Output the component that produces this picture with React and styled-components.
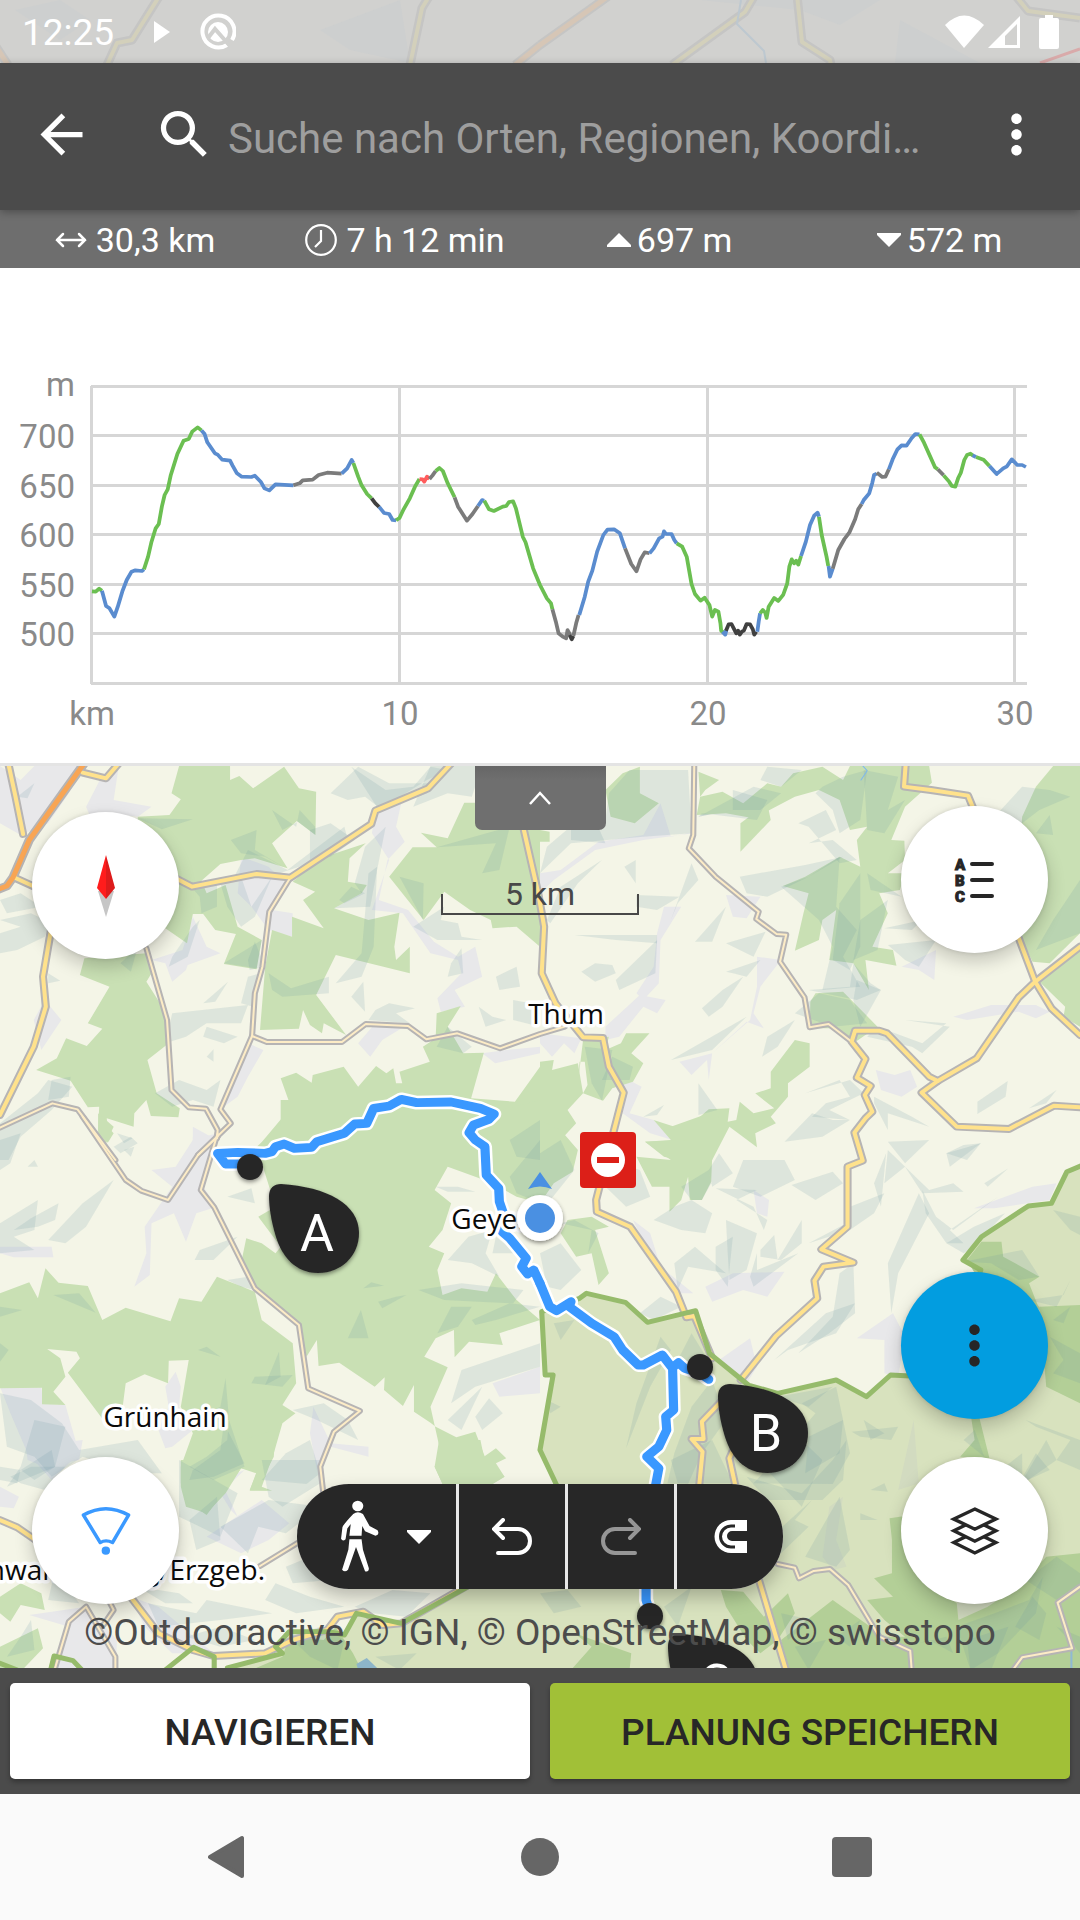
import React from 'react';
import styled, { createGlobalStyle, css } from 'styled-components';
import { MdArrowBack, MdMoreVert, MdSearch } from 'react-icons/md';

const GlobalStyle = createGlobalStyle`
  * {
    box-sizing: border-box;
  }

  body {
    background: #fafafa;
    font-family: Roboto, "Noto Sans", sans-serif;
    margin: 0;
  }

  button, input {
    font-family: inherit;
  }
`;

const Page = styled.div`
  display: flex;
  flex-direction: column;
  min-height: 100vh;
`;

const StatusBar = styled.div`
  align-items: center;
  background: #d1d1cf;
  color: white;
  display: flex;
  height: 63px;
  justify-content: space-between;
  padding: 0 20px 0 22px;
  position: relative;
`;

const StatusBackdrop = styled.svg`
  height: 100%;
  left: 0;
  position: absolute;
  top: 0;
  width: 100%;
`;

const StatusGroup = styled.div`
  align-items: center;
  display: flex;
  position: relative;
`;

const Clock = styled.time`
  font-size: 37px;
  line-height: 44px;
  margin-right: 40px;
  padding-top: 2px;
`;

const Header = styled.header`
  align-items: center;
  background: #4b4b4b;
  box-shadow: 0 2px 8px rgba(0, 0, 0, 0.3);
  color: white;
  display: flex;
  height: 147px;
  padding: 0 32px 4px 30px;
  position: relative;
  z-index: 1;
`;

const IconButton = styled.button`
  background: none;
  border: none;
  color: inherit;
  cursor: pointer;
  display: flex;
  padding: 0;
`;

const SearchBox = styled.label`
  align-items: center;
  display: flex;
  flex: 1;
  gap: 12px;
  margin-left: 60px;
`;

const SearchInput = styled.input`
  background: none;
  border: none;
  color: white;
  flex: 1;
  font-size: 42px;
  height: 56px;
  margin-top: 8px;
  min-width: 0;
  outline: none;
  padding: 0;
  text-overflow: ellipsis;

  &::placeholder {
    color: #9e9e9e;
    opacity: 1;
  }
`;

const Stats = styled.ul`
  background: #6e6e6e;
  color: white;
  display: grid;
  grid-template-columns: 5fr 5fr 4.8fr 5.2fr;
  height: 58px;
  list-style: none;
  margin: 0;
  padding: 2px 0 0;
`;

const Stat = styled.li`
  align-items: center;
  display: flex;
  font-size: 34px;
  gap: ${({ $tight }) => ($tight ? '6px' : '9px')};
  justify-content: center;
`;

const Elevation = styled.section`
  background: white;
  border-bottom: 3px solid #e4e4e4;

  svg {
    display: block;
    width: 100%;
  }

  text {
    fill: #8a8a8a;
    font-size: 33px;
  }
`;

const Map = styled.main`
  background: #f4f5e7;
  display: flex;
  flex: 1;
  flex-direction: column;
  min-height: 800px;
  overflow: hidden;
  position: relative;
`;

const MapCanvas = styled.svg`
  height: 100%;
  left: 0;
  position: absolute;
  top: 0;
  width: 100%;
`;

const PlaceName = styled.text`
  fill: #0a0a0a;
  font-family: "Open Sans", "Noto Sans", sans-serif;
  font-size: 28px;
  paint-order: stroke;
  stroke: white;
  stroke-linejoin: round;
  stroke-width: 7px;
`;

const PinLetter = styled.text`
  fill: white;
  font-size: 52px;
  text-anchor: middle;
`;

const CollapseButton = styled.button`
  align-items: center;
  align-self: center;
  background: linear-gradient(#666, #6f6f6f 14px);
  border: none;
  border-radius: 0 0 7px 7px;
  display: flex;
  height: 64px;
  justify-content: center;
  position: relative;
  width: 131px;
`;

const Scale = styled.div`
  align-self: center;
  color: #484848;
  display: flex;
  flex-direction: column;
  font-size: 32px;
  line-height: 36px;
  margin-top: 46px;
  position: relative;
  text-align: center;
  width: 198px;

  &::after {
    border: 2px solid #484848;
    border-top: none;
    content: '';
    height: 19px;
    margin-top: -18px;
  }
`;

const MapControls = styled.div`
  bottom: 64px;
  display: flex;
  flex-direction: column;
  gap: 38px;
  position: absolute;
  top: 40px;

  ${({ $side }) => ($side === 'left'
    ? css`left: 32px; padding-top: 6px;`
    : css`right: 32px;`)}
`;

const RoundButton = styled.button`
  align-items: center;
  background: ${({ $primary }) => ($primary ? '#029de0' : 'white')};
  border: none;
  border-radius: 50%;
  box-shadow: 0 8px 18px rgba(0, 0, 0, 0.2), 0 0 4px rgba(0, 0, 0, 0.12);
  color: #262626;
  cursor: pointer;
  display: flex;
  height: 147px;
  justify-content: center;
  padding: 0;
  width: 147px;
`;

const Spacer = styled.div`
  flex: 1;
`;

const MapFooter = styled.div`
  align-items: center;
  bottom: 0;
  display: flex;
  flex-direction: column;
  gap: 22px;
  left: 0;
  padding-bottom: 13px;
  pointer-events: none;
  position: absolute;
  right: 0;
`;

const Toolbar = styled.div`
  background: #e8e8e8;
  border-radius: 52px;
  box-shadow: 0 8px 18px rgba(0, 0, 0, 0.25);
  display: flex;
  gap: 3px;
  height: 105px;
  overflow: hidden;
  pointer-events: auto;
`;

const ToolButton = styled.button`
  align-items: center;
  background: #272727;
  border: none;
  color: white;
  cursor: pointer;
  display: flex;
  gap: 27px;
  justify-content: center;
  padding: 0 ${({ $wide }) => ($wide ? '10px' : '0')} 0 ${({ $wide }) => ($wide ? '28px' : '0')};
  width: ${({ $wide }) => ($wide ? '159px' : '106px')};

  &:disabled {
    color: #969696;
  }
`;

const Attribution = styled.p`
  color: #4c4c4c;
  font-size: 37px;
  line-height: 44px;
  margin: 0;
  white-space: nowrap;
`;

const ActionBar = styled.footer`
  background: #4b4b4b;
  display: grid;
  gap: 20px;
  grid-template-columns: 1fr 1fr;
  padding: 15px 10px;
`;

const ActionButton = styled.button`
  background: ${({ $primary }) => ($primary ? '#a1c037' : 'white')};
  border: none;
  border-radius: 5px;
  box-shadow: 0 3px 5px rgba(0, 0, 0, 0.3);
  color: #272727;
  cursor: pointer;
  font-size: 37px;
  font-weight: 500;
  height: 96px;
  padding: 2px 0 0;
`;

const SystemNav = styled.nav`
  align-items: center;
  background: #fafafa;
  color: #666;
  display: flex;
  gap: 272px;
  height: 126px;
  justify-content: center;
`;

/* The map and the profile are traced on sheets that share one drawing scale. */
const SHEETS = {
  nw: [0, -6],
  ne: [540, -6],
  sw: [0, 354],
  se: [540, 354],
  bw: [0, 674],
  be: [540, 674],
};

const Sheet = ({ at, children }) => (
  <g transform={ `translate(${at[0]} ${at[1]}) scale(.34439 .33333)` }>{ children }</g>
);

const FORESTS = {
  nw: [
    'M245 595L425 580 440 640 425 665 468 735 485 785 490 850 428 900 455 1000 522 1045 518 1072 438 1068 425 1020 390 1060 388 1100 310 1075 312 1100 330 1120 313 1148 285 1110 288 1040 255 1042 205 962 105 930 165 895 192 835 252 858 297 806 255 790 318 680 232 645Z',
    'M520 18L668 18 668 60 695 48 735 85 825 20 868 85 918 95 916 225 862 183 790 250 835 325 740 295 700 300 640 312 585 362 600 400 655 375 690 500 760 540 745 628 650 612 685 522 625 510 590 462 560 462 543 550 480 505 400 500 400 170 492 165 525 118 498 100Z',
    'M1062 250L930 295 850 365 915 395 880 420 940 505 848 470 848 530 790 510 770 620 755 810 868 806 880 750 900 795 935 820 940 790 1005 825 918 705 975 585 1190 640 1190 560 1150 600 1145 560 1160 458 1070 480 970 445 1050 400 1065 375 1010 365 1015 295Z',
    'M1348 128L1568 128 1568 560 1500 500 1430 505 1425 480 1365 450 1290 395 1230 480 1130 350 1198 262 1268 262 1222 218 1300 235Z',
    'M815 955L860 938 905 968 908 945 998 920 1040 980 1092 918 1122 940 1142 925 1150 970 1168 970 1160 935 1248 905 1228 860 1265 835 1268 760 1338 738 1300 800 1345 880 1405 878 1368 1015 1495 1025 1568 920 1568 1200 745 1200 745 1165 845 1042Z',
  ],
  ne: [
    'M190 90L240 40 290 20 290 100 345 130 275 190 205 170Z',
    'M870 290L770 350 705 378 780 400 765 460 740 572 810 540 820 480 860 450 840 600 910 610 955 690 945 600 1035 617 1025 570 965 560 1010 460 985 400 1045 390 1060 340 1010 340 1060 300 1058 242 1020 240 1060 140 1138 68 1130 18 900 18 880 60 820 20 735 40 700 80 660 70 590 130 530 95 465 110 455 165 540 160 620 175 740 110 810 90 870 120 900 210 950 200 920 240 930 320Z',
    'M582 190L660 130 670 180 582 275Z',
    'M460 35L520 60 480 90 465 110Z',
    'M0 210L28 215 28 245 0 245Z',
    'M1440 80L1490 18 1568 18 1568 520 1480 610 1430 605 1400 540 1390 300 1400 170Z',
    'M1568 570L1445 660 1525 740 1520 770 1568 800Z',
    'M800 700L880 695 980 800 910 850 850 805 783 805 785 725Z',
    'M783 850L740 840 670 935 670 985 625 1000 680 1045 620 1060 580 1025 570 1080 545 1085 550 1045 490 1048 420 1110 330 1080 380 1140 305 1145 360 1190 400 1200 500 1200 550 1100 630 1162 625 1120 685 1090 670 1070 720 1010 720 970 783 920Z',
    'M125 840L200 830 190 870 235 850 250 820 318 820 265 880 300 910 270 965 210 985 183 1022 125 1000 138 975 130 905 115 905 110 970Z',
    'M0 905L40 900 35 930 110 910 125 1000 80 1050 105 1090 60 1140 0 1200Z',
  ],
  sw: [
    'M745 80L815 20 815 -60 1080 -60 1360 -40 1420 -20 1568 -60 1568 250 1500 230 1420 185 1300 140 1262 210 1310 250 1285 330 1245 380 1290 400 1270 450 1285 525 1340 505 1415 515 1440 460 1500 540 1568 600 1450 640 1460 675 1362 665 1320 712 1318 630 1265 655 1232 710 1300 742 1250 860 1280 1000 1262 1040 1285 1092 1430 1092 1465 1070 1408 1010 1380 935 1325 952 1265 920 1250 908 1202 875 1202 795 1170 858 1115 810 1117 772 1088 800 985 728 925 738 920 660 890 710 870 620 740 505 700 430 715 355 760 370 800 400 815 380 750 290 800 260Z',
    'M0 520L85 487 110 535 132 445 170 488 255 498 297 600 365 563 495 604 520 535 585 545 630 470 740 515 760 600 850 670 860 790 820 855 858 880 820 910 795 1000 760 1100 790 1112 725 1110 745 1060 700 1045 655 1120 600 1180 540 1160 525 1100 525 1040 560 940 525 860 548 720 490 722 488 790 420 763 365 790 355 870 300 900 197 758 232 715 222 695 137 687 175 715 190 770 155 815 190 855 122 853 122 803 0 805Z',
    'M285 -20L330 20 308 70 285 40Z',
  ],
  se: [
    'M80 300L150 290 200 320 160 330 200 460 170 495 150 400 105 410 60 340Z',
    'M305 65L430 60 380 20 490 -20 540 0 500 110 497 185 470 240 435 240 430 170 410 240 376 275 376 200 325 200 280 110 380 120Z',
    'M0 0L60 30 110 90 95 155 40 190 0 250Z',
  ],
  bw: [
    'M525 60L580 60 610 10 700 0 800 -30 795 50 750 140 780 152 725 152 745 95 700 85 655 150 600 225 550 190 525 130Z',
    'M0 470L60 430 120 460 130 510 60 495 30 545 0 520Z',
    'M110 565L125 625 70 684 0 684 0 620Z',
    'M1275 0L1395 0 1405 50 1440 25 1470 55 1440 70 1465 110 1430 132 1285 132 1262 80Z',
  ],
};

const PARK_FORESTS = {
  se: [
    'M1450 560L1568 555 1568 850 1470 800Z',
    'M1282 365L1340 365 1345 410 1450 470 1420 490 1445 555 1480 600 1380 500 1260 455 1240 420Z',
    'M1250 880L1275 890 1305 1015 1220 1010 1262 960Z',
  ],
  be: [
    'M1015 235L1080 225 1100 400 1210 490 1215 540 1300 500 1400 430 1470 350 1568 340 1568 690 720 690 700 600 850 480 1000 590 1060 590 1000 540 950 480 1025 470 970 415 1022 400 1022 300Z',
    'M525 450L590 455 650 530 720 460 740 520 690 600 640 640 600 600 540 500Z',
    'M100 580L265 640 260 690 90 690 150 620Z',
  ],
  bw: ['M840 590L940 600 975 560 1025 640 1050 690 730 690 820 650Z'],
};

const TOWNS = {
  nw: [
    'M100 18L240 18 200 100 140 190 60 225 0 190 0 18 60 60Z',
    'M290 60L345 18 330 120 440 140 400 170 300 160 270 190 250 140Z',
    'M700 290L780 320 835 375 790 450 850 460 848 530 780 510 730 440 690 400Z',
    'M1090 150L1165 130 1150 200 1175 245 1125 300 1100 420 1185 450 1260 545 1330 590 1380 560 1400 650 1320 690 1350 740 1280 755 1270 715 1340 640 1330 600 1250 580 1170 460 1080 450 1130 300 1080 220Z',
    'M560 470L600 560 640 580 545 615 540 630 500 665 480 610 440 600 530 570Z',
    'M640 1048L720 850 765 870 720 950 690 1010Z',
    'M130 720L178 780 120 870 98 780Z',
    'M1040 850L1090 790 1190 790 1110 840 1075 890Z',
    'M1400 880L1470 870 1568 860 1568 880 1438 910Z',
    'M560 1130L640 1130 600 1200 560 1200Z',
  ],
  ne: [
    'M445 220L300 240 160 270 40 360 0 400 0 340 60 330 170 245 300 225 350 130 380 230 430 220Z',
    'M540 405L640 410 600 475 560 470Z',
    'M190 800L290 705 365 720 340 760 300 740 230 830 190 840Z',
    'M630 590L700 600 640 680 620 760 650 805 600 785 500 880 405 905 440 945 485 900 490 960 500 880 610 780 630 680Z',
    'M975 930L1030 945 1075 930 1095 980 1050 1010 990 990Z',
    'M1050 620L1150 570 1145 660 1100 630Z',
    'M1200 770L1310 735 1440 735 1480 755 1440 775 1390 755 1240 780Z',
    'M0 820L120 835 100 880 70 850 35 890 0 850Z',
    'M360 440L410 440 350 540 345 670 300 720 280 700 330 620 340 520Z',
    'M240 950L295 980 260 1060 330 1080 385 1140 320 1120 240 1060Z',
  ],
  sw: [
    'M560 60L630 40 590 200 630 260 570 280 540 365 505 280 440 310 435 465 390 500 425 400 420 320 500 200 440 150 510 140Z',
    'M0 380L150 380 155 412 40 412 0 400Z',
    'M510 755L525 800 520 860 560 930 500 980 480 985 460 930 490 860 480 800Z',
    'M0 800L120 800 125 850 190 855 230 1000 150 1080 80 1000 30 880Z',
    'M560 20L630 60 610 110 560 90Z',
    'M1430 790L1568 740 1568 820 1450 830Z',
    'M910 860L960 970 1070 980 1070 1010 960 980 920 1050 900 940Z',
  ],
  se: [
    'M620 210L665 240 660 290 630 280Z',
    'M480 500L560 460 710 455 660 530 590 510 500 545Z',
    'M1025 580L1060 650 1040 770 1000 760 1000 660 920 655Z',
    'M520 720L610 655 630 740 600 790Z',
    'M270 300L320 340 350 440 445 520 400 520 330 430Z',
    'M1430 200L1500 190 1480 240 1320 265 1260 265Z',
    'M1085 900L1100 1090 1040 1110Z',
  ],
  bw: [
    'M75 20L240 0 230 60 130 80 80 60Z',
    'M0 140L55 170 40 205 0 200Z',
    'M640 120L690 230 670 210 640 160 710 90Z',
    'M85 525L250 500 340 600 335 690 150 690 200 560Z',
    'M380 470L460 500 620 640 500 640 420 560Z',
    'M600 290L760 180 840 250 780 300 700 340Z',
  ],
  be: ['M840 200L880 170 860 300 890 380 850 390 820 350Z', 'M1210 490L1230 460 1450 420 1400 500 1300 540 1215 540Z'],
};

const SHADES = {
  nw: [
    'M960 100L1040 20 1130 70 1260 70 1240 100 1110 150 1060 110 1010 120Z',
    'M1020 20L1100 150 1240 60 1300 30 1250 20 1200 80 1120 90Z',
    'M1250 18L1400 18 1370 110 1300 100 1200 140Z',
    'M670 240L745 210 740 270 830 325 770 290 700 280Z',
    'M790 150L860 200 870 150 915 200 915 225 865 185 820 210Z',
    'M720 270L835 330 860 310 1000 200 1010 240 900 310 780 350 680 350Z',
    'M900 210L960 190 1030 240 960 290 900 300Z',
    'M1060 260L1120 200 1095 330 1075 440 970 445 1050 400 1030 370Z',
    'M1070 340L1095 320 1085 560 1050 650 975 670 1050 580Z',
    'M640 370L700 350 730 440 790 350 740 470 700 500 660 440Z',
    'M555 380L630 370 630 440 585 460 580 410Z',
    'M0 480L90 460 150 490 130 530 50 570 0 580 0 520 60 500Z',
    'M500 590L560 500 580 480 545 590 490 620Z',
    'M650 610L760 540 745 625Z',
    'M720 600L740 545 770 620 725 630Z',
    'M590 730L662 665 625 725Z',
    'M780 640L845 685 955 650 955 700 820 710 790 690Z',
    'M500 760L720 735 700 790 600 790 540 830 480 850Z',
    'M720 650L755 640 735 740 700 730Z',
    'M1020 710L1055 665 1060 755Z',
    'M1090 750L1130 730 1205 745 1150 760 1190 790 1070 780Z',
    'M1200 500L1290 440 1280 480 1330 490 1340 530 1400 540 1270 540Z',
    'M1310 610L1340 565 1345 640 1300 650Z',
    'M1390 740L1430 770 1470 780 1410 800Z',
    'M1490 720L1540 730 1568 800 1490 780Z',
    'M1268 860L1300 800 1370 860 1345 880Z',
    'M0 1090L110 1000 140 960 210 980 150 1050 60 1130 25 1200 0 1200Z',
    'M150 960L205 950 200 1010 140 1020Z',
    'M400 175L560 178 470 208Z',
    'M50 110L100 70 80 115Z',
    'M330 1160L380 1130 400 1150 350 1180Z',
    'M600 890L620 868 620 905Z',
    'M1268 262L1480 200 1450 330 1400 340 1440 250Z',
    'M1160 350L1230 370 1228 480Z',
    'M350 610L400 560 380 635Z',
    'M140 640L175 662 140 670Z',
    'M0 420L60 400 120 440 20 460Z',
    'M1480 1140L1568 1080 1568 1200 1500 1190Z',
    'M450 1000L520 960 600 990 640 960 620 1040 560 1020 500 1040Z',
    'M985 420L1020 380 1060 400 1000 430Z',
    'M1440 650L1500 620 1510 680 1450 690Z',
    'M600 800L690 830 650 850 590 830Z',
  ],
  ne: [
    'M200 100L260 30 430 30 440 220 300 230 90 250 0 340 20 260 100 190 190 180Z',
    'M90 210L160 180 190 250 90 240Z',
    'M460 170L620 80 700 100 640 150 560 150Z',
    'M460 170L560 150 560 90 660 120 630 180 470 160Z',
    'M660 20L760 30 700 80 640 60Z',
    'M820 80L880 50 950 30 930 180 870 220 850 150 800 100Z',
    'M940 30L1040 50 1010 150 1060 120 1000 220 950 210Z',
    'M750 190L830 150 860 210 780 250 850 240 920 300 870 310 780 200Z',
    'M780 350L870 290 860 440 920 510 880 590 930 680 820 690 850 560 810 480 700 380Z',
    'M580 350L770 315 880 290 780 350 660 410 600 400Z',
    'M870 430L930 340 930 560 900 630 850 600Z',
    'M930 480L1010 420 980 570 910 600Z',
    'M950 340L1050 410 960 390Z',
    'M910 610L960 670 990 690 920 720 780 690 900 680Z',
    'M280 405L405 410 340 450 280 440Z',
    'M100 525L340 525 340 550 220 540Z',
    'M450 545L540 440 500 545Z',
    'M540 550L655 515 620 590Z',
    'M160 610L210 615 220 640 160 665 120 635Z',
    'M220 660L340 540 335 640 230 690Z',
    'M540 635L640 600 600 650 560 640Z',
    'M470 745L530 690 590 650 530 740 490 770Z',
    'M380 900L600 770 500 870Z',
    'M645 890L660 830 740 780 690 860Z',
    'M740 760L810 700 900 720 950 790 850 800Z',
    'M950 830L1080 860 1110 880 1190 800 1060 780 1180 790 1110 850 980 800Z',
    'M1000 505L1110 480 1080 510Z',
    'M1010 555L1150 540 1100 620 1060 600Z',
    'M1320 170L1400 80 1480 90 1540 110 1450 150 1400 190Z',
    'M1440 220L1480 165 1490 225Z',
    'M1490 480L1568 360 1568 520 1440 570Z',
    'M1270 1025L1358 963 1352 1010 1270 1062Z',
    'M1420 1045L1500 990 1470 1030Z',
    'M770 1000L870 960 900 1010 830 1030 790 1070 900 1080 840 1050 940 1000 900 960Z',
    'M710 1145L790 1060 850 1080 900 1080 820 1130Z',
    'M970 1010L1080 1070 1130 1100 1010 1060 1010 1110 970 1030Z',
    'M130 860L210 870 180 1022 150 970Z',
    'M210 890L270 920 260 960 180 960Z',
    'M460 970L515 1050 460 1065Z',
    'M300 1070L360 1035 340 1065Z',
    'M245 320L278 300 278 370Z',
    'M60 380L180 300 110 370 30 490 20 480Z',
    'M380 480L440 310 460 360 400 430Z',
    'M1180 1180L1280 1150 1240 1200Z',
    'M920 660L990 690 930 800 910 720Z',
  ],
  sw: [
    'M0 310L110 240 100 330 40 350 100 390 0 400Z',
    'M40 330L90 295 170 250 160 300 110 320Z',
    'M140 360L240 250 330 180 250 320 190 370Z',
    'M565 420L580 390 690 350 620 420Z',
    'M660 230L730 205 740 250Z',
    'M155 525L230 520 278 578Z',
    'M575 690L600 680 640 710Z',
    'M770 795L810 695 815 770Z',
    'M1010 655L1048 570 1070 655Z',
    'M1055 505L1078 487 1115 497Z',
    'M1098 545L1150 530 1180 525 1110 565Z',
    'M1265 200L1330 200 1380 215 1300 215Z',
    'M1215 510L1340 490 1430 500 1520 510 1490 550 1390 545 1290 540Z',
    'M1270 640L1310 560 1370 560 1330 620Z',
    'M1370 600L1480 550 1568 560 1440 600 1380 615Z',
    'M1300 420L1360 350 1430 330 1410 400 1450 470 1370 430Z',
    'M600 1010L660 960 665 900 710 1040 620 1080 550 1040Z',
    'M640 860L655 775 665 900 560 900Z',
    'M0 820L90 840 180 910 230 990 400 960 470 1060 380 1060 240 1010 150 1070 100 1010 20 980Z',
    'M100 900L190 920 160 1040 90 1070 20 1100 60 1040Z',
    'M830 1000L900 960 930 1060 890 1092 760 1080Z',
    'M850 870L940 850 1010 900 1040 960 920 900Z',
    'M1380 890L1420 835 1460 880 1400 930Z',
    'M1340 750L1568 670 1568 740 1380 800 1310 850Z',
    'M1300 900L1400 800 1340 930Z',
    'M360 90L390 80 380 110Z',
    'M340 40L385 55 360 70Z',
    'M80 140L100 120 110 140Z',
    'M0 60L60 40 30 130 0 150Z',
    'M0 560L65 570 0 590Z',
    'M0 670L25 690 0 725Z',
    'M1480 170L1568 60 1568 250 1500 220Z',
    'M1440 350L1500 400 1430 400Z',
    'M740 770L850 765 820 800 730 790Z',
    'M660 480L720 470 740 510 700 500Z',
  ],
  se: [
    'M590 120L710 120 740 180 640 230 560 200Z',
    'M510 205L630 210 570 240 660 300 650 330 620 260Z',
    'M730 195L850 155 880 190 800 240Z',
    'M390 260L440 240 500 280 480 340 410 330 330 300Z',
    'M490 150L520 100 560 160 500 200Z',
    'M640 390L680 345 690 420 760 300 760 370 700 420 640 410Z',
    'M540 300L630 340 600 450 550 480 545 400Z',
    'M200 120L290 150 320 230 250 260 190 200Z',
    'M900 260L1000 220 970 280 900 330 780 370 890 310Z',
    'M1000 190L1010 90 1130 210 1200 190 1230 215 1110 220 1060 140Z',
    'M970 190L1005 100 990 260Z',
    'M1010 430L1100 220 1130 280 1080 380 1040 460 1020 580Z',
    'M1110 210L1150 290 1200 330 1330 230 1190 330 1230 370 1180 370 1120 280Z',
    'M1180 370L1260 320 1350 280 1260 380 1230 400Z',
    'M870 460L910 430 915 580 840 640 750 700 850 590Z',
    'M680 720L830 580 915 550 860 640 720 690Z',
    'M510 380L560 350 545 500 510 450Z',
    'M390 430L450 380 540 460 430 440 400 510Z',
    'M610 470L630 400 630 450 750 400 620 500Z',
    'M290 580L350 530 410 560 330 600Z',
    'M1190 140L1280 70 1230 75 1180 100Z',
    'M1300 200L1360 145 1290 190Z',
    'M1130 60L1010 65 1060 130Z',
    'M60 310L100 300 170 340 140 400 150 330Z',
    'M410 200L490 150 497 190 470 240 440 240Z',
    'M40 610L100 600 60 660Z',
    'M250 985L280 850 350 650 380 690 320 800Z',
    'M390 1000L440 860 500 780 540 900 470 1000 430 1092 370 1090Z',
    'M440 640L500 740 400 720Z',
    'M620 1090L700 1000 800 880 760 850 860 800 900 1000 850 1092Z',
    'M770 1060L870 1000 880 900 780 950Z',
    'M690 830L850 800 780 860Z',
    'M905 935L1040 920 1020 960 930 950Z',
    'M1110 830L1200 820 1160 850Z',
    'M960 1110L1000 1090 1010 1115Z',
    'M1230 425L1400 390 1450 470 1390 480 1310 430Z',
    'M1420 540L1520 525 1540 480 1500 560Z',
    'M1490 600L1540 560 1520 610Z',
    'M1480 650L1568 700 1568 790 1490 760 1520 720Z',
    'M1490 270L1568 290 1568 345 1540 330Z',
    'M1410 900L1440 920 1540 960 1500 1020 1568 1050 1568 960Z',
    'M1390 1092L1440 1000 1480 1050Z',
    'M0 100L60 60 100 150 30 240 0 250Z',
    'M0 400L60 370 120 450 60 510 20 500Z',
    'M1230 960L1262 930 1290 1010Z',
    'M940 900L1000 940 960 960Z',
    'M20 840L60 860 30 880Z',
  ],
  bw: [
    'M560 90L640 30 650 -50 710 70 620 110 550 120Z',
    'M30 110L90 80 190 80 130 150 60 130Z',
    'M520 60L690 160 640 290 520 230Z',
    'M550 240L630 170 640 300 570 330Z',
    'M640 260L780 180 930 200 830 280 750 260 720 340Z',
    'M760 60L930 60 930 130 820 200 780 170Z',
    'M430 490L570 520 600 480 790 520 640 540 460 560Z',
    'M400 440L520 460 560 490 480 490Z',
    'M60 590L90 540 100 630 20 650Z',
    'M60 90L150 30 160 80 100 120Z',
    'M800 430L900 470 1000 500 860 520 770 480Z',
    'M1030 500L1140 450 1250 460 1180 530 1080 520Z',
    'M540 590L640 560 740 600 640 620Z',
    'M840 590L930 560 1000 600 980 690 900 650Z',
    'M1090 650L1210 640 1160 690Z',
    'M0 80L60 90 50 130 0 120Z',
    'M180 310L240 260 300 320 200 330Z',
    'M830 380L900 350 960 420 850 430Z',
    'M160 390L230 490 140 480Z',
  ],
  be: [
    'M600 110L760 160 850 60 890 0 880 120 820 180 660 180Z',
    'M650 80L760 200 820 60 760 0 700 60Z',
    'M660 300L790 180 740 240 780 260 700 340Z',
    'M770 350L870 170 900 330 860 380Z',
    'M930 220L980 240 930 240Z',
    'M360 500L440 440 400 560Z',
    'M1210 560L1320 520 1420 480 1460 410 1440 520 1330 640 1250 690Z',
    'M1240 600L1360 560 1310 690 1250 690Z',
    'M1410 420L1500 350 1568 400 1568 440 1500 480Z',
    'M1380 560L1430 470 1470 520 1450 600Z',
    'M1500 560L1568 590 1568 640 1545 610Z',
    'M1100 610L1180 590 1200 640 1130 600Z',
    'M740 620L830 600 780 690Z',
    'M860 590L930 540 900 620Z',
    'M380 60L500 0 560 130 400 130Z',
    'M1390 140L1470 0 1500 60Z',
    'M0 460L80 450 120 500 40 520Z',
    'M700 520L790 540 720 600Z',
    'M1350 80L1400 40 1400 110Z',
  ],
};

/* kind: o = trunk road, y = main road, w = minor road */
const ROADS = [
  ['w', 'nw', 'M843 353L782 455 762 620 740 700 732 828 640 1048 670 1090 575 1185'],
  ['w', 'nw', 'M732 828L775 846 993 846 1062 792 1185 798 1238 838 1328 820 1452 865 1568 822 1640 800'],
  ['w', 'nw', 'M425 565L485 780 498 990 548 1042 598 1046 632 1110 630 1135'],
  ['w', 'nw', 'M0 1103L152 1030 225 1048 335 1200'],
  ['w', 'sw', 'M632 40L583 210 622 262 740 505 868 615 895 805 1045 873 970 935 930 1040 940 1130'],
  ['w', 'sw', 'M240 -10L365 180 410 212 488 240 575 105 632 50'],
  ['w', 'ne', 'M448 10L445 225 432 265 510 350 635 455 628 477 687 522 715 524 697 605 768 712 783 802 838 792 905 845'],
  ['w', 'be', 'M690 372L740 383 752 415 795 393 842 387 895 435 985 590 1075 632 1080 700'],
  ['w', 'be', 'M1568 440L1503 488 1545 625 1400 652 1366 700'],
  ['w', 'bw', 'M755 378L870 305'],
  ['w', 'bw', 'M160 684L200 545 250 500 335 650 335 700'],
  ['w', 'bw', 'M315 480L330 510 300 555'],
  ['y', 'nw', 'M22 0L45 110 67 222'],
  ['y', 'nw', 'M240 38L308 55 345 10'],
  ['y', 'nw', 'M40 352L110 385'],
  ['y', 'nw', 'M510 355L558 380 745 342 843 353 1078 192 1090 152 1243 85 1315 5'],
  ['y', 'nw', 'M148 510L125 650 133 740 98 860 0 1065'],
  ['y', 'ne', 'M-60 150L-5 400 12 500 5 640 45 730 125 832 183 834 200 920 243 998 210 1130 163 1320 165 1355 262 1400 395 1595 425 1672 448 1668 500 1795'],
  ['y', 'ne', 'M1062 10L1057 80 1135 90 1243 107 1260 150'],
  ['y', 'ne', 'M1385 520L1438 665 1485 745 1568 825'],
  ['y', 'ne', 'M1155 963L1108 998 1210 1100 1362 1107 1492 1037 1568 1042'],
  ['y', 'ne', 'M1568 560L1438 665 1390 712 1268 895 1155 963 1130 950 1008 820 985 812 915 812 905 845 945 897 920 953 960 978 943 1005 965 1055 945 1075 913 1118 937 1202 893 1220 893 1400 817 1468 910 1508 823 1520 797 1562 805 1615 685 1728 583 1860'],
  ['y', 'se', 'M530 840L470 905 475 957 440 957 472 995 462 1100'],
  ['y', 'se', 'M590 920L550 1015 570 1110'],
  ['y', 'be', 'M630 400L717 700'],
  ['y', 'bw', 'M0 240L50 262 110 305'],
  ['y', 'bw', 'M375 465L460 580 560 630 620 648 770 640 850 600 950 570 980 530 1055 515 1110 555 1165 550 1360 435'],
  ['o', 'nw', 'M246 8L85 240 38 352 20 378 -5 388'],
];

const ROAD_STYLES = {
  w: { casing: 6, width: 2, color: '#fdecc6' },
  y: { casing: 8, width: 4, color: '#ffe28c' },
  o: { casing: 9, width: 5, color: '#f8a554' },
};

const PARK = 'M5 575L115 535 135 520 248 547 312 607 452 572 492 700 605 795 690 820 860 780 948 830 1018 765 1075 768 1200 700 1280 450 1228 420 1282 350 1418 258 1485 250 1530 155 1600 125 1600 1700 -908 1700 -908 1644 -748 1600 -768 1580 -728 1535 -613 1535 -568 1545 -533 1480 -403 1510 -218 1405 80 1250 55 1110 0 990 38 765 15 765Z';

const ROUTE = [
  ['sw', 'M728 132L655 132 632 100 690 97 770 100 790 95 800 80 825 72 855 85 905 82 920 65 1000 40 1030 12 1065 10 1085 -35 1130 -42 1165 -62 1210 -52 1310 -54 1395 -35 1435 -18 1420 -2 1375 15 1362 38 1380 60 1408 80 1412 165 1448 205 1450 245 1465 290 1458 335 1480 355 1528 415 1515 440 1532 462 1550 450 1568 490'],
  ['se', 'M0 490L28 560 48 572 90 545 85 560 150 610 215 650 240 690 285 735 300 735 355 705 385 745 388 870 365 890 368 930 345 980 310 1010 345 1045 335 1100 308 1340 308 1440 320 1480'],
  ['se', 'M385 742L402 728 420 745 465 760 490 778'],
];

const PROFILE = [
  ['l', '#6bbf51', 'M267 694L278 695 288 686 296 692'],
  ['l', '#5a8ccf', 'M296 692L308 738 318 745 332 770 342 740 355 695 368 660 382 635 393 631 412 633 418 628'],
  ['l', '#6bbf51', 'M418 628L430 590 440 545 452 505 461 492 470 440 478 405 487 388 496 345 515 282 533 242 548 237 558 215 574 202 585 211'],
  ['l', '#5a8ccf', 'M585 211L594 222 602 247 624 280 632 284 645 299 668 302 675 316 688 340 702 350 730 351 740 347 757 365 768 385 782 391 800 373 852 376'],
  ['l', '#7b7b7b', 'M852 376L870 370 879 361 908 359 925 345 950 338 992 341'],
  ['l', '#5a8ccf', 'M992 341L1008 325 1021 300 1026 309'],
  ['l', '#6bbf51', 'M1026 309L1040 350 1050 376 1066 402 1079 415'],
  ['l', '#404040', 'M1079 415L1090 430 1101 441'],
  ['l', '#5a8ccf', 'M1101 441L1115 459 1130 462 1140 480 1150 481'],
  ['l', '#6bbf51', 'M1150 481L1160 474 1172 448 1190 415 1205 380 1218 357'],
  ['l', '#ff5c5c', 'M1218 357L1227 358 1232 365 1240 350 1247 357'],
  ['l', '#7b7b7b', 'M1247 357L1256 346 1265 333'],
  ['l', '#6bbf51', 'M1265 333L1276 324 1286 333 1300 370 1320 412'],
  ['l', '#7b7b7b', 'M1320 412L1330 440 1356 482 1372 462 1388 438'],
  ['l', '#5a8ccf', 'M1388 438L1400 420 1406 422'],
  ['l', '#6bbf51', 'M1406 422L1420 448 1434 453 1460 440 1470 438 1478 426 1490 424 1498 445 1518 530 1526 547 1548 625 1568 675 1588 715 1600 730 1604 748'],
  ['r', '#7b7b7b', 'M36 748L46 785 54 820 66 830 76 835 80 810 88 825'],
  ['r', '#404040', 'M86 825L92 838 97 828'],
  ['r', '#7b7b7b', 'M97 828L105 790 112 765'],
  ['r', '#5a8ccf', 'M114 765L130 710 140 665 152 632 166 575 184 525 196 509 215 508 232 520 247 565'],
  ['r', '#7b7b7b', 'M247 565L265 612 280 634 292 598 304 577 318 580'],
  ['r', '#5a8ccf', 'M318 580L330 565 346 535 356 530 360 514 366 522 382 522 390 540 397 550'],
  ['r', '#6bbf51', 'M397 550L413 560 426 590 440 672 450 702 466 722 478 713 492 735 500 770 508 750 518 755 524 790 526 812 534 818'],
  ['r', '#5a8ccf', 'M530 815L538 824 541 810'],
  ['r', '#404040', 'M540 812L548 793 556 792 564 808 570 820 575 812 580 824 586 815 592 812 600 792 610 793 618 808 622 824 628 815'],
  ['r', '#5a8ccf', 'M631 815L635 785 639 760'],
  ['r', '#6bbf51', 'M639 760L647 750 654 758 658 774 664 740 680 714 692 723 706 705 718 670 724 620 731 598 738 610 744 602 750 614 758 588'],
  ['r', '#5a8ccf', 'M758 588L772 545 784 495 796 467 806 458 810 470'],
  ['r', '#6bbf51', 'M810 470L818 525 832 590 837 618'],
  ['r', '#5a8ccf', 'M838 618L842 650 850 626'],
  ['r', '#7b7b7b', 'M850 626L866 570 884 537 898 518 915 478 924 448 934 432'],
  ['r', '#5a8ccf', 'M934 432L940 420 956 400 965 368 970 345 978 341'],
  ['r', '#7b7b7b', 'M978 338L994 351 1003 350 1013 328'],
  ['r', '#5a8ccf', 'M1013 328L1024 298 1038 268 1050 256 1064 257 1078 236 1090 222 1102 223'],
  ['r', '#6bbf51', 'M1102 223L1115 248 1147 322 1155 328'],
  ['r', '#7b7b7b', 'M1155 328L1172 346'],
  ['r', '#6bbf51', 'M1172 346L1188 365 1196 378 1206 380 1214 355 1222 338 1232 300 1240 285 1250 281 1258 287'],
  ['r', '#5a8ccf', 'M1256 286L1266 291'],
  ['r', '#6bbf51', 'M1266 291L1288 299 1305 318'],
  ['r', '#5a8ccf', 'M1305 318L1326 342 1345 325 1356 319 1370 298 1386 315 1400 315 1411 321'],
];

const PROFILE_SHEETS = { l: [0, 92], r: [540, 92] };

const LEVELS = [
  [120, 'm'], [168, '700'], [218, '650'], [267, '600'], [317, '550'], [366, '500'], [416, ''],
];

const DISTANCES = [[92, 'km'], [400, '10'], [708, '20'], [1015, '30']];

const PINS = [
  { letter: 'A', x: 269, y: 418, dotX: 250, dotY: 401 },
  { letter: 'B', x: 718, y: 618, dotX: 700, dotY: 601 },
  { letter: 'C', x: 668, y: 868, dotX: 650, dotY: 850 },
];

const PLACES = [
  { name: 'Thum', x: 566, y: 258 },
  { name: 'Geyer', x: 490, y: 463 },
  { name: 'Grünhain', x: 165, y: 661 },
  { name: 'Schwarzenberg/Erzgeb.', x: 265, y: 814, anchor: 'end' },
];

const Areas = ({ areas, ...rest }) => (
  <g { ...rest }>
    {
      Object.keys(areas).map((key) => (
        <Sheet at={ SHEETS[key] } key={ key }>
          { areas[key].map((d) => <path d={ d } key={ d } />) }
        </Sheet>
      ))
    }
  </g>
);

const Line = ({ at, d, color, width }) => (
  <Sheet at={ at }>
    <path
      d={ d }
      fill="none"
      stroke={ color }
      strokeWidth={ width * 2.95 }
      strokeLinecap="round"
      strokeLinejoin="round"
    />
  </Sheet>
);

const Roads = () => (
  <>
    { ROADS.map(([kind, at, d]) => (
      <Line key={ d } at={ SHEETS[at] } d={ d } color="#b6b4b4" width={ ROAD_STYLES[kind].casing } />
    )) }
    { ROADS.map(([kind, at, d]) => (
      <Line
        key={ d }
        at={ SHEETS[at] }
        d={ d }
        color={ ROAD_STYLES[kind].color }
        width={ ROAD_STYLES[kind].width }
      />
    )) }
  </>
);

const HikingMap = () => (
  <MapCanvas viewBox="0 0 1080 902" preserveAspectRatio="xMidYMin slice" role="img" aria-label="Karte">
    <defs>
      <filter id="pinShadow" x="-30%" y="-30%" width="160%" height="160%">
        <feDropShadow dx="0" dy="2" stdDeviation="2" floodOpacity="0.45" />
      </filter>
    </defs>
    <Areas areas={ TOWNS } fill="#e8e8ea" />
    <Areas areas={ FORESTS } fill="#c9e0b4" />
    <Sheet at={ SHEETS.se }>
      <path d={ PARK } fill="#b9cd93" fillOpacity="0.48" />
    </Sheet>
    <Areas areas={ PARK_FORESTS } fill="#b3cf97" />
    <Areas areas={ SHADES } fill="#6b98a4" fillOpacity="0.16" />
    <Sheet at={ SHEETS.bw }>
      <path d="M1035 672L1065 654 1095 684 1040 690Z" fill="#8db5c9" />
    </Sheet>
    <Line at={ SHEETS.ne } d="M935 15L950 32 932 60" color="#7db8ee" width={ 1 } />
    <Line at={ SHEETS.be } d="M1543 630L1543 700" color="#8fb9d4" width={ 2 } />
    <Roads />
    <Line at={ SHEETS.se } d={ PARK } color="#96bb6b" width={ 5 } />
    <Line at={ SHEETS.bw } d="M480 690L562 622 622 650 622 700" color="#96bb6b" width={ 5 } />
    <Line at={ SHEETS.bw } d="M147 690L157 648 212 662 238 690" color="#96bb6b" width={ 5 } />
    <Line at={ SHEETS.bw } d="M0 670L50 690" color="#96bb6b" width={ 5 } />
    { ROUTE.map(([at, d]) => (
      <Line key={ d } at={ SHEETS[at] } d={ d } color="white" width={ 14 } />
    )) }
    { ROUTE.map(([at, d]) => (
      <Line key={ d } at={ SHEETS[at] } d={ d } color="#3a98ff" width={ 9 } />
    )) }
    { PLACES.map(({ name, x, y, anchor }) => (
      <PlaceName key={ name } x={ x } y={ y } textAnchor={ anchor || 'middle' }>{ name }</PlaceName>
    )) }
    { PINS.map(({ letter, x, y, dotX, dotY }) => (
      <g key={ letter }>
        <g filter="url(#pinShadow)" fill="#262626">
          <circle cx={ dotX } cy={ dotY } r="13" />
          <path
            transform={ `translate(${x} ${y})` }
            d="M0 12C0 4 5 0 12 0C58 3 90 20 90 49C90 72 72 89 49 89C26 89 13 72 7 53C2 37 0 22 0 12Z"
          />
        </g>
        <PinLetter x={ x + 48 } y={ y + 67 }>{ letter }</PinLetter>
      </g>
    )) }
    <rect x="580" y="366" width="56" height="56" rx="4" fill="#dc1f18" />
    <circle cx="608" cy="394" r="17" fill="white" />
    <rect x="597" y="391" width="22" height="6" fill="#dc1f18" />
    <path d="M540 406L552 423Q540 418 528 423Z" fill="#4a90e2" />
    <circle cx="540" cy="452" r="23" fill="white" filter="url(#pinShadow)" />
    <circle cx="540" cy="452" r="15" fill="#4a90e2" />
  </MapCanvas>
);

const ElevationProfile = () => (
  <Elevation>
    <svg viewBox="0 0 1080 495" role="img" aria-label="Höhenprofil">
      <g stroke="#d6d6d6" strokeWidth="3">
        { LEVELS.map(([y], index) => (
          <line key={ y } x1="91" x2="1027" y1={ y - (index ? 0.5 : 1.5) } y2={ y - (index ? 0.5 : 1.5) } />
        )) }
        { DISTANCES.map(([x]) => (
          <line key={ x } x1={ x - 0.5 } x2={ x - 0.5 } y1="118" y2="416" />
        )) }
      </g>
      { LEVELS.map(([y, label], index) => (
        <text key={ y } x="75" y={ index ? y + 12 : y + 8 } textAnchor="end">{ label }</text>
      )) }
      { DISTANCES.map(([x, label]) => (
        <text key={ x } x={ x } y="457" textAnchor="middle">{ label }</text>
      )) }
      { PROFILE.map(([sheet, color, d]) => (
        <Sheet at={ PROFILE_SHEETS[sheet] } key={ d }>
          <path d={ d } fill="none" stroke={ color } strokeWidth="11" strokeLinejoin="round" />
        </Sheet>
      )) }
    </svg>
  </Elevation>
);

const App = () => (
  <Page>
    <GlobalStyle />
    <StatusBar>
      <StatusBackdrop viewBox="0 0 1080 63" preserveAspectRatio="xMidYMid slice" aria-hidden="true">
        <path d="M15 10L60 0 90 20 60 40ZM320 30L400 0 410 63 350 50ZM700 0L880 0 840 25 800 10ZM900 20L980 63 895 63Z" fill="#cdcfcf" />
        <g fill="none" strokeLinejoin="round">
          <g stroke="#c5c5c4" strokeWidth="9">
            <path d="M160 -5L132 40 117 43 107 65" />
            <path d="M430 -5L422 8 410 65" />
            <path d="M755 -5L745 12 672 65" />
            <path d="M797 -5L802 42 830 60 832 70" />
            <path d="M1015 -5L1028 11 1080 18" />
            <path d="M610 -5L540 45M-5 45L8 65M515 65L540 45" />
          </g>
          <g stroke="#d3d0bb" strokeWidth="4">
            <path d="M160 -5L132 40 117 43 107 65" />
            <path d="M430 -5L422 8 410 65" />
            <path d="M755 -5L745 12 672 65" />
            <path d="M797 -5L802 42 830 60 832 70" />
            <path d="M1015 -5L1028 11 1080 18" />
          </g>
          <path d="M610 -5L540 45M-5 45L8 65M515 65L540 45" stroke="#d6c6b6" strokeWidth="5" />
          <path d="M1040 63L1080 49" stroke="#d9aaaa" strokeWidth="3" />
          <path d="M741 0L737 24 764 51 766 63" stroke="#bdc8d0" strokeWidth="2" />
        </g>
      </StatusBackdrop>
      <StatusGroup>
        <Clock>12:25</Clock>
        <svg width="16" height="22" viewBox="0 0 16 22" fill="white"><path d="M0 0L16 11 0 22Z" /></svg>
        <svg width="66" height="38" viewBox="-30 0 66 38" fill="none">
          <path d="M27 32A16 16 0 1 1 32 27" stroke="white" strokeWidth="4" />
          <circle cx="18" cy="19" r="10" fill="white" />
          <path d="M8 25L15 16 30 33" stroke="#d1d1cf" strokeWidth="4" />
        </svg>
      </StatusGroup>
      <StatusGroup>
        <svg width="115" height="36" viewBox="945 13 115 36" fill="white">
          <path d="M945 24Q964 5 984 24L964 47Z" />
          <path fillRule="evenodd" d="M988 47L1020 15V47ZM1005 35V44H1017V23Z" />
          <path d="M1041 17H1045V14H1053V17H1057Q1059 17 1059 19V46Q1059 48 1057 48H1041Q1039 48 1039 46V19Q1039 17 1041 17Z" />
        </svg>
      </StatusGroup>
    </StatusBar>

    <Header>
      <IconButton aria-label="Zurück"><MdArrowBack size={ 63 } /></IconButton>
      <SearchBox>
        <MdSearch size={ 63 } />
        <SearchInput type="text" aria-label="Suche" placeholder="Suche nach Orten, Regionen, Koordi…" />
      </SearchBox>
      <IconButton aria-label="Mehr"><MdMoreVert size={ 63 } /></IconButton>
    </Header>

    <Stats>
      <Stat>
        <svg width="32" height="16" viewBox="0 0 32 16" fill="none" stroke="white" strokeWidth="2.5" strokeLinecap="round">
          <path d="M2 8H30M8 2L2 8 8 14M24 2L30 8 24 14" />
        </svg>
        30,3 km
      </Stat>
      <Stat>
        <svg width="32" height="32" viewBox="0 0 32 32" fill="none" stroke="white" strokeWidth="2.2">
          <circle cx="16" cy="16" r="14.8" />
          <path d="M16 6V17L10 23" />
        </svg>
        7 h 12 min
      </Stat>
      <Stat $tight>
        <svg width="24" height="14" viewBox="0 0 24 14" fill="white"><path d="M12 0L24 12V14H0V12Z" /></svg>
        697 m
      </Stat>
      <Stat $tight>
        <svg width="24" height="14" viewBox="0 0 24 14" fill="white"><path d="M12 14L24 2V0H0V2Z" /></svg>
        572 m
      </Stat>
    </Stats>

    <ElevationProfile />

    <Map>
      <HikingMap />
      <CollapseButton aria-label="Profil einklappen">
        <svg width="22" height="14" viewBox="0 0 22 14" fill="none" stroke="white" strokeWidth="2.5">
          <path d="M1 13L11 2 21 13" />
        </svg>
      </CollapseButton>
      <Scale>5 km</Scale>
      <MapFooter>
        <Toolbar>
          <ToolButton $wide aria-label="Wandern">
            <svg width="40" height="73" viewBox="990 180 115 220" preserveAspectRatio="none" fill="white">
              <circle cx="1041" cy="198" r="16" />
              <path d="M1028 222Q1041 212 1056 222L1075 258 1098 271Q1105 285 1092 288L1062 274 1054 258 1052 288H1017L1021 252 1011 266 1006 298Q998 306 993 297L997 262Q1000 253 1028 222Z" />
              <path d="M1017 298H1052L1056 330 1073 386Q1073 398 1062 395L1036 322 1013 390Q1004 400 996 390L1014 330Z" />
            </svg>
            <svg width="24" height="14" viewBox="0 0 24 14" fill="white"><path d="M12 14L24 2V0H0V2Z" /></svg>
          </ToolButton>
          <ToolButton aria-label="Rückgängig">
            <svg width="40" height="38" viewBox="0 0 40 38" fill="none" stroke="currentColor" strokeWidth="4" strokeLinecap="round">
              <path d="M11 2L2 11 11 20M2 11H26A12 12 0 0 1 26 35H6" />
            </svg>
          </ToolButton>
          <ToolButton disabled aria-label="Wiederholen">
            <svg width="40" height="38" viewBox="0 0 40 38" fill="none" stroke="currentColor" strokeWidth="4" strokeLinecap="round">
              <path d="M29 2L38 11 29 20M38 11H14A12 12 0 0 0 14 35H34" />
            </svg>
          </ToolButton>
          <ToolButton aria-label="Wegen folgen">
            <svg width="33" height="33" viewBox="0 0 33 33" fill="none">
              <path d="M33 0H17A16.5 16.5 0 0 0 17 33H33V21H18A5 5 0 0 1 18 11H33Z" fill="white" />
              <path d="M21 6H17A10.3 10.3 0 0 0 17 27H21" stroke="#272727" strokeWidth="3" />
            </svg>
          </ToolButton>
        </Toolbar>
        <Attribution>©Outdooractive, © IGN, © OpenStreetMap, © swisstopo</Attribution>
      </MapFooter>
      <MapControls $side="left">
        <RoundButton aria-label="Kompass">
          <svg width="18" height="62" viewBox="0 0 18 62">
            <path d="M1 36L9 62 17 36Z" fill="#c6c6c6" />
            <path d="M9 0L0 33 9 44Z" fill="#ff1c1c" />
            <path d="M9 0L18 33 9 44Z" fill="#dd1b1b" />
          </svg>
        </RoundButton>
        <Spacer />
        <RoundButton aria-label="Standort">
          <svg width="50" height="50" viewBox="235 197 143 149" preserveAspectRatio="none">
            <path d="M242 224Q306 186 371 224L325 306Q306 296 290 306Z" fill="none" stroke="#3a99ff" strokeWidth="10" strokeLinejoin="round" />
            <circle cx="306" cy="330" r="12" fill="#3a99ff" />
          </svg>
        </RoundButton>
      </MapControls>
      <MapControls $side="right">
        <RoundButton aria-label="Wegpunkte">
          <svg width="43" height="56" viewBox="0 0 43 56">
            <g fill="#262626" stroke="#262626" fontSize="15" fontWeight="900">
              <text x="2" y="18">A</text>
              <text x="2" y="34">B</text>
              <text x="2" y="50">C</text>
            </g>
            <path d="M19 12H39M19 28H39M19 44H39" stroke="#262626" strokeWidth="4" strokeLinecap="round" />
          </svg>
        </RoundButton>
        <Spacer />
        <RoundButton $primary aria-label="Optionen"><MdMoreVert size={ 63 } /></RoundButton>
        <RoundButton aria-label="Karteninhalte">
          <svg width="50" height="50" viewBox="1189 197 145 149" preserveAspectRatio="none" fill="white" stroke="#262626" strokeWidth="10">
            <path d="M1261 275L1322 306 1261 337 1200 306Z" />
            <path d="M1261 240L1322 271 1261 302 1200 271Z" />
            <path d="M1261 206L1322 236 1261 266 1200 236Z" />
          </svg>
        </RoundButton>
      </MapControls>
    </Map>

    <ActionBar>
      <ActionButton>NAVIGIEREN</ActionButton>
      <ActionButton $primary>PLANUNG SPEICHERN</ActionButton>
    </ActionBar>

    <SystemNav>
      <IconButton aria-label="Zurück">
        <svg width="40" height="44" viewBox="0 0 40 44" fill="currentColor" stroke="currentColor" strokeWidth="4" strokeLinejoin="round">
          <path d="M2 22L34 3V41Z" />
        </svg>
      </IconButton>
      <IconButton aria-label="Startseite">
        <svg width="40" height="40" viewBox="0 0 40 40" fill="currentColor"><circle cx="20" cy="20" r="19" /></svg>
      </IconButton>
      <IconButton aria-label="Übersicht">
        <svg width="40" height="40" viewBox="0 0 40 40" fill="currentColor"><rect width="40" height="40" rx="4" /></svg>
      </IconButton>
    </SystemNav>
  </Page>
);

export default App;
